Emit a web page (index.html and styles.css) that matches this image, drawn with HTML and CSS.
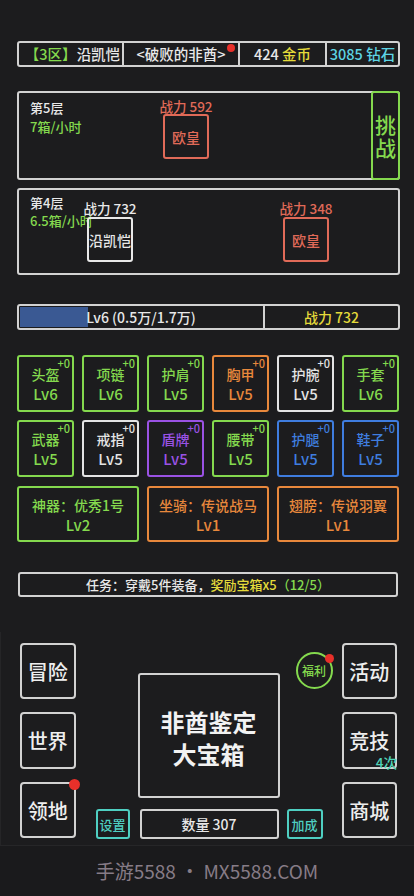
FILE: index.html
```html
<!DOCTYPE html>
<html lang="zh">
<head>
<meta charset="utf-8">
<link rel="stylesheet" href="styles.css">
</head>
<body>
<div class="page">
  <div class="main">
    <div class="topbar">
      <div class="seg seg1"><span class="green">【3区】</span>沿凯恺</div>
      <div class="seg seg2">&lt;破败的非酋&gt;<span class="dot dot-top"></span></div>
      <div class="seg seg3">424&nbsp;<span class="yellow">金币</span></div>
      <div class="seg seg4 cyan">3085 钻石</div>
    </div>

    <div class="floor floor5">
      <div class="info">
        <div>第5层</div>
        <div class="green">7箱/小时</div>
      </div>
      <div class="unit red">
        <div class="power">战力 592</div>
        <div class="ubox">欧皇</div>
      </div>
      <div class="spacer"></div>
      <div class="challenge"><span class="vtext">挑战</span></div>
    </div>

    <div class="floor floor4">
      <div class="info">
        <div>第4层</div>
        <div class="green">6.5箱/小时</div>
      </div>
      <div class="unit white">
        <div class="power">战力 732</div>
        <div class="ubox">沿凯恺</div>
      </div>
      <div class="unit red enemy2">
        <div class="power">战力 348</div>
        <div class="ubox">欧皇</div>
      </div>
    </div>

    <div class="expbar">
      <div class="exp">
        <div class="fill" style="width:28%"></div>
        <span class="exptext">Lv6 (0.5万/1.7万)</span>
      </div>
      <div class="exppower yellow">战力 732</div>
    </div>

    <div class="equips">
      <div class="eq c-green"><span class="plus">+0</span><div>头盔</div><div class="lv">Lv6</div></div>
      <div class="eq c-green"><span class="plus">+0</span><div>项链</div><div class="lv">Lv6</div></div>
      <div class="eq c-green"><span class="plus">+0</span><div>护肩</div><div class="lv">Lv5</div></div>
      <div class="eq c-orange"><span class="plus">+0</span><div>胸甲</div><div class="lv">Lv5</div></div>
      <div class="eq c-white"><span class="plus">+0</span><div>护腕</div><div class="lv">Lv5</div></div>
      <div class="eq c-green"><span class="plus">+0</span><div>手套</div><div class="lv">Lv6</div></div>
      <div class="eq c-green"><span class="plus">+0</span><div>武器</div><div class="lv">Lv5</div></div>
      <div class="eq c-white"><span class="plus">+0</span><div>戒指</div><div class="lv">Lv5</div></div>
      <div class="eq c-purple"><span class="plus">+0</span><div>盾牌</div><div class="lv">Lv5</div></div>
      <div class="eq c-green"><span class="plus">+0</span><div>腰带</div><div class="lv">Lv5</div></div>
      <div class="eq c-blue"><span class="plus">+0</span><div>护腿</div><div class="lv">Lv5</div></div>
      <div class="eq c-blue"><span class="plus">+0</span><div>鞋子</div><div class="lv">Lv5</div></div>
    </div>

    <div class="specials">
      <div class="sp c-green"><div>神器：优秀1号</div><div class="lv">Lv2</div></div>
      <div class="sp c-orange"><div>坐骑：传说战马</div><div class="lv">Lv1</div></div>
      <div class="sp c-orange"><div>翅膀：传说羽翼</div><div class="lv">Lv1</div></div>
    </div>

    <div class="task">任务：穿戴5件装备，<span class="yellow">奖励宝箱x5</span><span class="green">（12/5）</span></div>
  </div>

  <div class="bottom">
    <div class="col">
      <div class="btn">冒险</div>
      <div class="btn">世界</div>
      <div class="btn">领地<span class="dot dot-btn"></span></div>
    </div>
    <div class="mid">
      <div class="fuli">福利<span class="dot dot-fuli"></span></div>
      <div class="chest">非酋鉴定<br>大宝箱</div>
      <div class="midrow">
        <div class="small cyanbtn set">设置</div>
        <div class="small count">数量 307</div>
        <div class="small cyanbtn bonus">加成</div>
      </div>
    </div>
    <div class="col">
      <div class="btn">活动</div>
      <div class="btn">竞技<span class="times">4次</span></div>
      <div class="btn">商城</div>
    </div>
  </div>

  <div class="footer">手游5588 • MX5588.COM</div>
</div>
</body>
</html>
```

FILE: styles.css
```css
* { box-sizing: border-box; }
html, body { margin: 0; padding: 0; }
body {
  background: #1c1c1e;
  color: #e8e8e8;
  font-family: "Noto Sans CJK SC", "Noto Sans", sans-serif;
  font-weight: 500;
  width: 414px;
  height: 896px;
  overflow: hidden;
}
.page { display: flex; flex-direction: column; height: 896px; }
.main { padding: 41px 14px 0 17px; }

.green { color: #84d94e; }
.yellow { color: #e4da3a; }
.cyan { color: #5dd4e4; }
.red { color: #e06a58; }
.white { color: #e8e8e8; }

.dot {
  position: absolute;
  background: #e8302a;
  border-radius: 50%;
}

/* top bar */
.topbar {
  display: flex;
  height: 26px;
  border: 2px solid #d2d2d2;
  border-radius: 3px;
  font-size: 14.5px;
  line-height: 22px;
}
.seg {
  position: relative;
  display: flex;
  align-items: center;
  justify-content: center;
  white-space: nowrap;
}
.seg + .seg { border-left: 2px solid #d2d2d2; }
.seg1 { width: 103px; padding-left: 4px; }
.seg2 { width: 116px; }
.seg3 { width: 87px; }
.seg4 { flex: 1; }
.dot-top { width: 8px; height: 8px; right: 3px; top: 1px; }

/* floors */
.floor {
  display: flex;
  border: 2px solid #d2d2d2;
  border-radius: 3px;
  font-size: 13.5px;
}
.floor5 { margin-top: 24px; height: 89px; }
.floor4 { margin-top: 8px; height: 87px; }
.info { white-space: nowrap; padding-left: 11px; font-size: 13px; }
.floor5 .info { width: 141px; line-height: 19px; padding-top: 5px; }
.floor4 .info { width: 65px; line-height: 18px; padding-top: 4px; }
.unit {
  width: 52px;
  display: flex;
  flex-direction: column;
  align-items: center;
  white-space: nowrap;
}
.floor5 .unit { padding-top: 5px; }
.floor4 .unit { padding-top: 10px; }
.power { line-height: 16px; }
.ubox {
  width: 46px;
  height: 45px;
  border: 2px solid currentColor;
  border-radius: 3px;
  display: flex;
  align-items: center;
  justify-content: center;
  font-size: 14px;
}
.floor4 .ubox { margin-top: 1px; }
.enemy2 { margin-left: 144px; }
.spacer { flex: 1; }
.challenge {
  width: 29px;
  margin: -2px -2px -2px 0;
  border: 2px solid #84d94e;
  border-radius: 3px;
  color: #84d94e;
  font-size: 21px;
  display: flex;
  align-items: center;
  justify-content: center;
  padding-top: 4px;
}
.vtext {
  writing-mode: vertical-rl;
  letter-spacing: 2px;
  line-height: 24px;
}

/* exp bar */
.expbar {
  margin-top: 29px;
  height: 26px;
  display: flex;
  border: 2px solid #d2d2d2;
  border-radius: 3px;
  font-size: 14px;
}
.exp {
  position: relative;
  width: 244px;
  display: flex;
  align-items: center;
  justify-content: center;
  padding: 1px;
}
.fill {
  position: absolute;
  left: 1px;
  top: 1px;
  bottom: 1px;
  background: #3a5993;
}
.exptext { position: relative; }
.exppower {
  flex: 1;
  border-left: 2px solid #d2d2d2;
  display: flex;
  align-items: center;
  justify-content: center;
}

/* equips */
.equips {
  margin-top: 25px;
  display: grid;
  grid-template-columns: repeat(6, 57px);
  grid-auto-rows: 57px;
  gap: 8px;
}
.eq, .sp {
  position: relative;
  border: 2px solid currentColor;
  border-radius: 3px;
  display: flex;
  flex-direction: column;
  align-items: center;
  justify-content: center;
  font-size: 14px;
  line-height: 19px;
  padding-top: 1px;
}
.eq .lv { font-size: 15px; }
.plus {
  position: absolute;
  top: 0px;
  right: 2px;
  font-size: 11px;
  line-height: 13px;
}
.c-green { color: #84d94e; }
.c-orange { color: #e8883c; }
.c-white { color: #e4e4e4; }
.c-purple { color: #9a52e4; }
.c-blue { color: #3f7ddf; }

.specials {
  margin-top: 9px;
  display: grid;
  grid-template-columns: repeat(3, 122px);
  gap: 8px;
}
.sp { height: 56px; font-size: 14px; }
.sp .lv { font-size: 15px; }

.task {
  margin: 30px 2px 0 1px;
  height: 25px;
  border: 2px solid #d2d2d2;
  border-radius: 3px;
  font-size: 13px;
  display: flex;
  align-items: center;
  justify-content: center;
  white-space: nowrap;
}

/* bottom panel */
.bottom {
  margin-top: 35px;
  height: 213px;
  display: flex;
  padding: 11px 17px 0 19px;
  border-left: 1px solid #252527;
}
.col {
  width: 56px;
  display: flex;
  flex-direction: column;
  gap: 13px;
}
.btn {
  position: relative;
  height: 56px;
  border: 2px solid #d2d2d2;
  border-radius: 4px;
  display: flex;
  align-items: center;
  justify-content: center;
  font-size: 20px;
  color: #eeeeee;
}
.col .btn:nth-child(2) { height: 57px; }
.dot-btn { width: 11px; height: 11px; top: -5px; right: -6px; }
.times {
  position: absolute;
  right: -2px;
  bottom: -3px;
  font-size: 13.5px;
  line-height: 16px;
  color: #4fd3b8;
}
.mid {
  position: relative;
  width: 227px;
  margin: 0 19px 0 20px;
  display: flex;
  flex-direction: column;
}
.fuli {
  position: absolute;
  left: 200px;
  top: 9px;
  width: 37px;
  height: 37px;
  border: 2px solid #84d94e;
  border-radius: 50%;
  color: #84d94e;
  font-size: 12px;
  display: flex;
  align-items: center;
  justify-content: center;
}
.dot-fuli { width: 9px; height: 9px; top: 0px; right: -3px; }
.chest {
  margin: 30px 0 0 42px;
  width: 142px;
  height: 125px;
  border: 2px solid #d2d2d2;
  border-radius: 3px;
  display: flex;
  align-items: center;
  justify-content: center;
  text-align: center;
  font-size: 24px;
  line-height: 32px;
  font-weight: 700;
  color: #f2f2f2;
  padding-top: 4px;
}
.midrow {
  margin-top: 11px;
  display: flex;
  height: 30px;
}
.small {
  border: 2px solid #d2d2d2;
  border-radius: 3px;
  display: flex;
  align-items: center;
  justify-content: center;
  font-size: 14px;
}
.cyanbtn { border-color: #4fcfc2; color: #4fcfc2; font-size: 13px; }
.set { width: 34px; }
.count { width: 139px; margin-left: 10px; }
.bonus { width: 36px; margin-left: 8px; }

.footer {
  flex: 1;
  border-top: 1px solid #262628;
  background: #1a1a1c;
  display: flex;
  align-items: center;
  justify-content: center;
  font-size: 19px;
  font-weight: 400;
  color: #877c87;
  padding-bottom: 2px;
}
```
